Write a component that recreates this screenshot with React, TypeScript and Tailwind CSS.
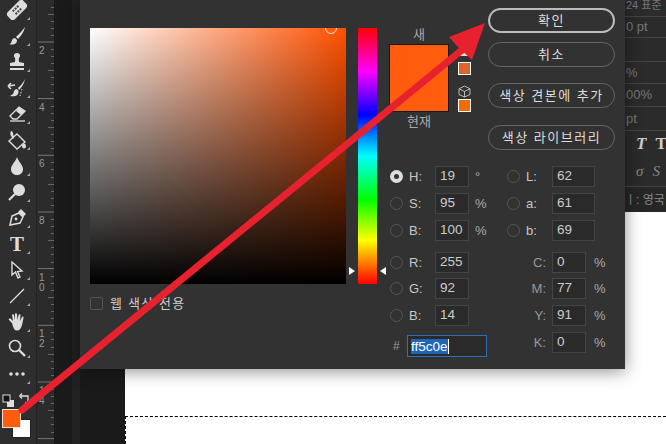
import React from 'react';

const cjk = { fontFamily: '"Liberation Sans", "Noto Sans CJK KR", sans-serif' };

const tools: React.ReactNode[] = [
  <g key="bandage" transform="rotate(-45 10 10)"><rect x="-1" y="5" width="22" height="10" rx="3" fill="#ddd" /><g fill="#444"><rect x="6" y="7" width="2" height="2" /><rect x="9" y="7" width="2" height="2" /><rect x="12" y="7" width="2" height="2" /><rect x="6" y="11" width="2" height="2" /><rect x="9" y="11" width="2" height="2" /><rect x="12" y="11" width="2" height="2" /></g></g>,
  <path key="brush" d="M18 1 C15 5 12 8 9 11 L11 13 C14 10 17 6 18 1 Z M8 12 C5 12 5 15 4 17 C3 18 2 18 2 18 C5 19 10 19 10 14 Z" fill="#ddd" />,
  <path key="stamp" d="M10 1 C13 1 14 4 12 6 C11.5 7 12 9 12 10 L17 11 L17 14 L3 14 L3 11 L8 10 C8 9 8.5 7 8 6 C6 4 7 1 10 1 Z M3 16 L17 16 L17 18 L3 18 Z" fill="#ddd" />,
  <g key="history"><path d="M18 1 C16 5 14 7 11 10 L12 12 C15 9 17 6 18 1 Z M10 11 C7 11 7 14 6 16 L3 18 C7 19 12 18 11.5 13 Z" fill="#ddd" /><path d="M8 7 L1 8 M1 8 L4 5 M1 8 L4 11" stroke="#ddd" strokeWidth="1.5" fill="none" /><path d="M15 11 L13 18" stroke="#ddd" strokeDasharray="1.5 1.5" fill="none" /></g>,
  <g key="eraser"><path d="M3 12 L12 3 L18 7 L10 15 L6 15 Z" fill="none" stroke="#ddd" strokeWidth="1.3" /><path d="M9 7 L12 3 L18 7 L14 11 Z" fill="#ddd" /><path d="M3 17 L18 17" stroke="#ddd" strokeWidth="1.3" /></g>,
  <g key="bucket"><path d="M10 4 L18 12 L10 19 L2 11 Z" fill="none" stroke="#ddd" strokeWidth="1.4" /><path d="M5 1 C3 1 3 4 4 6 L6 9 L7 8 L6 3 Z" fill="#ddd" /><ellipse cx="17" cy="16" rx="2" ry="2.5" fill="#ddd" /></g>,
  <path key="drop" d="M10 1 C11 5 16 9 16 13 C16 17 13 19 10 19 C7 19 4 17 4 13 C4 9 9 5 10 1 Z" fill="#ddd" />,
  <g key="dodge"><circle cx="12" cy="8" r="6" fill="#ddd" /><path d="M8 12 L2 18" stroke="#ddd" strokeWidth="2.2" /></g>,
  <g key="pen"><path d="M3 17 L5 8 L12 5 L16 9 L13 15 Z" fill="none" stroke="#ddd" strokeWidth="1.5" /><path d="M11 4 L14 1 L19 6 L16 9 Z" fill="#ddd" /><circle cx="9" cy="11" r="1.4" fill="#ddd" /></g>,
  null,
  <g key="pointer"><path d="M5 2 L5 15 L8.5 12 L11 18 L13 17 L10.5 11.5 L15 11 Z" fill="#222" stroke="#ddd" strokeWidth="1.4" /></g>,
  <path key="line" d="M3 17 L17 3" stroke="#ddd" strokeWidth="1.2" />,
  <path key="hand" d="M5 11 L2 8 C1 7 3 6 4 7 L6 9 L5 3 C5 2 7 2 7 3 L8 8 L8 2 C8 1 10 1 10 2 L10.5 8 L11.5 3 C12 2 13.5 2 13.5 3 L13 9 L15 5 C15.5 4 17 5 16.5 6 L15 13 C14 17 12 19 9 18.5 C7 18 6 15 5 11 Z" fill="#ddd" />,
  <g key="zoom"><circle cx="8" cy="8" r="5.5" fill="none" stroke="#ddd" strokeWidth="1.6" /><path d="M12 12 L18 18" stroke="#ddd" strokeWidth="2.4" /></g>,
  <g key="more" fill="#ddd"><circle cx="4" cy="10" r="1.8" /><circle cx="10" cy="10" r="1.8" /><circle cx="16" cy="10" r="1.8" /></g>,
];

function Toolbar() {
  return (
    <div className="relative flex h-full w-[36px] shrink-0 flex-col items-center bg-[#2e2e2e]">
      <div className="mt-[-3px] flex flex-col">
        {tools.map((icon, i) => (
          <div key={i} className="relative flex h-[26px] w-[36px] items-center justify-center pr-[2px]">
            {icon ? (
              <svg width="20" height="20" viewBox="0 0 20 20">{icon}</svg>
            ) : (
              <span className="text-[21px] font-bold leading-none text-[#ddd]" style={{ fontFamily: '"Liberation Serif", serif' }}>T</span>
            )}
            <div className="absolute bottom-[3px] right-[6px] h-0 w-0 border-b-[3px] border-l-[3px] border-b-[#aaa] border-l-transparent" />
          </div>
        ))}
      </div>
      <svg className="absolute left-[1px] top-[392px]" width="34" height="16" viewBox="0 0 34 16">
        <rect x="6" y="8" width="7" height="7" fill="#ddd" />
        <rect x="2" y="3" width="7" height="7" fill="#111" stroke="#ddd" />
        <path d="M20 4 L27 4 L27 12 M18.5 4 L21 1.5 M18.5 4 L21 6.5 M24.5 10 L27 13 L29.5 10" fill="none" stroke="#ddd" strokeWidth="1.3" />
      </svg>
      <div className="absolute left-[12px] top-[419px] h-[19px] w-[19px] border border-[#222] bg-white" />
      <div className="absolute left-[2px] top-[409px] h-[19px] w-[19px] border border-[#f0e0d0] bg-[#ff5c0e]" />
    </div>
  );
}

function Ruler() {
  const majors = [-14.7, 42, 98.6, 155.3, 212, 268.6, 325.3, 382, 438.6];
  const labels: [number, string[]][] = [[42, ['2']], [98.6, ['4']], [155.3, ['6']], [212, ['8']], [268.6, ['1', '0']], [325.3, ['1', '2']], [382, ['1', '4']]];
  return (
    <svg width="18" height="444" viewBox="0 0 18 444" className="shrink-0 bg-[#2b2b2b]">
      <path d="M0.5 0 V444" stroke="#222" />
      {majors.map((m) => (
        <g key={m}>
          <path d={`M2 ${m} H18`} stroke="#777" />
          {[1, 2, 3, 4, 5, 6, 7].map((k) => (
            <path key={k} d={`M${k === 4 ? 12 : 15} ${Math.round(m + k * 7.08) + 0.5} H18`} stroke="#666" />
          ))}
        </g>
      ))}
      {labels.map(([y, chars]) =>
        chars.map((c, i) => (
          <text key={`${y}-${i}`} x="3" y={y + 12 + i * 10} fontSize="10" fill="#999" fontFamily="Liberation Sans, sans-serif">{c}</text>
        )),
      )}
    </svg>
  );
}

function Radio({ on }: { on?: boolean }) {
  return on ? (
    <div className="flex h-[13px] w-[13px] items-center justify-center rounded-full bg-[#ddd]">
      <div className="h-[5px] w-[5px] rounded-full bg-[#333]" />
    </div>
  ) : (
    <div className="h-[13px] w-[13px] rounded-full border border-[#555]" />
  );
}

function Field({ value, w = 34 }: { value: string; w?: number }) {
  return (
    <div className="flex h-[21px] items-center border border-[#444] bg-[#2a2a2a] pl-[4px] text-[13.5px] text-[#ccc]" style={{ width: w }}>
      {value}
    </div>
  );
}

function ColorRow({ label, value, unit, on, gap, w }: { label: string; value: string; unit?: string; on?: boolean; gap: string; w?: number }) {
  return (
    <div className={`flex items-center ${gap}`}>
      <Radio on={on} />
      <span className="ml-[6px] w-[26px] text-[13px] text-[#c8c8c8]">{label}</span>
      <Field value={value} w={w} />
      {unit && <span className="ml-[6px] text-[13px] text-[#aaa]">{unit}</span>}
    </div>
  );
}

function CmykRow({ label, value, gap }: { label: string; value: string; gap: string }) {
  return (
    <div className={`flex items-center ${gap}`}>
      <span className="w-[45px] pr-[6px] text-right text-[13px] text-[#999]">{label}</span>
      <Field value={value} />
      <span className="ml-[8px] text-[13px] text-[#aaa]">%</span>
    </div>
  );
}

function DialogButton({ label, primary, className }: { label: string; primary?: boolean; className: string }) {
  return (
    <div className={`flex h-[25px] w-[127px] items-center justify-center rounded-full border text-[13px] tracking-[1.5px] text-[#ddd] ${primary ? 'border-[#bbb] border-2' : 'border-[#666]'} ${className}`}>
      {label}
    </div>
  );
}

function ColorDialog() {
  return (
    <div className="absolute left-[80px] top-0 flex h-[369px] w-[545px] bg-[#323232] pl-[10px] shadow-[0_2px_16px_rgba(0,0,0,0.45)]" style={cjk}>
      <div className="flex w-[256px] flex-col pt-[28px]">
        <div className="relative h-[256px] w-[256px] overflow-hidden bg-[linear-gradient(to_top,#000,transparent),linear-gradient(to_right,#fff,#ff5000)]">
          <div className="absolute right-[9px] top-[-6px] h-[12px] w-[12px] rounded-full border border-[#ffeedd]" />
        </div>
        <div className="mt-[13px] flex items-center gap-[7px]">
          <div className="h-[13px] w-[13px] rounded-[2px] border border-[#555]" />
          <span className="text-[13px] leading-[13px] tracking-[1.2px] text-[#ccc]">웹 색상 전용</span>
        </div>
      </div>

      <div className="relative ml-[12px] mt-[28px] h-[256px] w-[19px] bg-[linear-gradient(to_bottom,#f00,#f0f_17%,#00f_34%,#0ff_50%,#0f0_67%,#ff0_83%,#f00)]">
        <div className="absolute left-[-9px] top-[239px] h-0 w-0 border-y-[4px] border-l-[6px] border-y-transparent border-l-white" />
        <div className="absolute right-[-9px] top-[239px] h-0 w-0 border-y-[4px] border-r-[6px] border-y-transparent border-r-white" />
      </div>

      <div className="ml-[13px] flex w-[235px] flex-col">
        <div className="flex">
          <div className="ml-[-1px] flex w-[60px] flex-col items-center pt-[25px]">
            <span className="h-[19px] text-[13px] leading-[19px] text-[#aaa]">새</span>
            <div className="h-[68px] w-[60px] border border-[#1a1a1a] bg-[#ff5c0e]" />
            <span className="text-[13px] leading-[19px] text-[#aaa]">현재</span>
          </div>
          <div className="ml-[9px] flex w-[13px] flex-col items-center pt-[46px]">
            <div className="h-0 w-0 border-x-[6px] border-b-[10px] border-x-transparent border-b-[#ddd]" />
            <div className="mt-[6px] h-[13px] w-[13px] border border-white bg-[#e0622c]" />
            <svg className="mt-[10px]" width="13" height="13" viewBox="0 0 13 13" fill="none" stroke="#bbb">
              <path d="M6.5 1 L12 3.8 V9.5 L6.5 12 L1 9.5 V3.8 Z M1 3.8 L6.5 6.5 L12 3.8 M6.5 6.5 V12" />
            </svg>
            <div className="mt-[1px] h-[13px] w-[13px] border border-white bg-[#f56a00]" />
          </div>
          <div className="ml-[17px] flex flex-col pt-[8px]">
            <DialogButton label="확인" primary className="" />
            <DialogButton label="취소" className="mt-[9px]" />
            <DialogButton label="색상 견본에 추가" className="mt-[16px]" />
            <DialogButton label="색상 라이브러리" className="mt-[17px]" />
          </div>
        </div>

        <div className="mt-[16px] flex">
          <div className="flex w-[117px] flex-col">
            <ColorRow label="H:" value="19" unit="°" on gap="" />
            <ColorRow label="S:" value="95" unit="%" gap="mt-[6px]" />
            <ColorRow label="B:" value="100" unit="%" gap="mt-[6px]" />
            <ColorRow label="R:" value="255" gap="mt-[11px]" />
            <ColorRow label="G:" value="92" gap="mt-[5px]" />
            <ColorRow label="B:" value="14" gap="mt-[6px]" />
            <div className="mt-[9px] flex items-center">
              <span className="ml-[3px] w-[14px] text-[12px] text-[#999]">#</span>
              <div className="flex h-[22px] w-[80px] items-center border border-[#2f6fb5] bg-[#2a2a2a] pl-[3px] text-[13.5px] leading-[15px]">
                <span className="border-r border-white bg-[#1f66b8] text-white">ff5c0e</span>
              </div>
            </div>
          </div>
          <div className="flex flex-col">
            <ColorRow label="L:" value="62" gap="" w={43} />
            <ColorRow label="a:" value="61" gap="mt-[6px]" w={43} />
            <ColorRow label="b:" value="69" gap="mt-[6px]" w={43} />
            <CmykRow label="C:" value="0" gap="mt-[11px]" />
            <CmykRow label="M:" value="77" gap="mt-[5px]" />
            <CmykRow label="Y:" value="91" gap="mt-[6px]" />
            <CmykRow label="K:" value="0" gap="mt-[6px]" />
          </div>
        </div>
      </div>
    </div>
  );
}

function SidePanel() {
  const rows: [string, number][] = [['', 17], ['0 pt', 21], ['', 24], ['%', 22], ['00%', 23], ['pt', 24]];
  return (
    <div className="absolute right-0 top-0 flex h-[212px] w-[41px] flex-col overflow-hidden bg-[#2b2b2b] text-[13px] text-[#777]" style={cjk}>
      {rows.map(([text, h], i) => (
        <div key={i} className="flex items-center whitespace-nowrap border-b border-[#444] pl-[1px]" style={{ height: h }}>
          {text}
        </div>
      ))}
      <div className="flex h-[26px] items-center gap-[9px] pl-[11px] text-[17px] font-bold italic text-[#ccc]" style={{ fontFamily: '"Liberation Serif", serif' }}>
        <span>T</span><span className="not-italic">T</span>
      </div>
      <div className="flex h-[29px] items-center gap-[9px] pl-[11px] text-[15px] italic text-[#888]" style={{ fontFamily: '"Liberation Serif", serif' }}>
        <span>σ</span><span>S</span>
      </div>
      <div className="flex flex-1 items-center whitespace-nowrap border-t border-[#444] bg-[#262626] text-[12px] text-[#888]">
        <span>ㅣ: 영국</span>
      </div>
      <span className="absolute left-[1px] top-[0px] whitespace-nowrap text-[11px] leading-[11px]">24 표준</span>
    </div>
  );
}

export default function App() {
  return (
    <div className="relative flex h-[444px] w-[666px] overflow-hidden bg-white">
      <Toolbar />
      <Ruler />
      <div className="flex h-full w-[71px] shrink-0 bg-[#1a1a1a]">
        <div className="ml-[18px] h-full w-[8px] bg-[#212121]" />
      </div>
      <div className="flex-1 pt-[416px]">
        <div className="h-full border-l border-t border-dashed border-black" />
      </div>
      <SidePanel />
      <ColorDialog />
      <svg className="absolute inset-0" width="666" height="444" viewBox="0 0 666 444">
        <path d="M22 410 L462 50" stroke="#e8212e" strokeWidth="7" strokeLinecap="round" />
        <path d="M485 23 L449 37 L458 47 L472 60 Z" fill="#e8212e" />
      </svg>
    </div>
  );
}
